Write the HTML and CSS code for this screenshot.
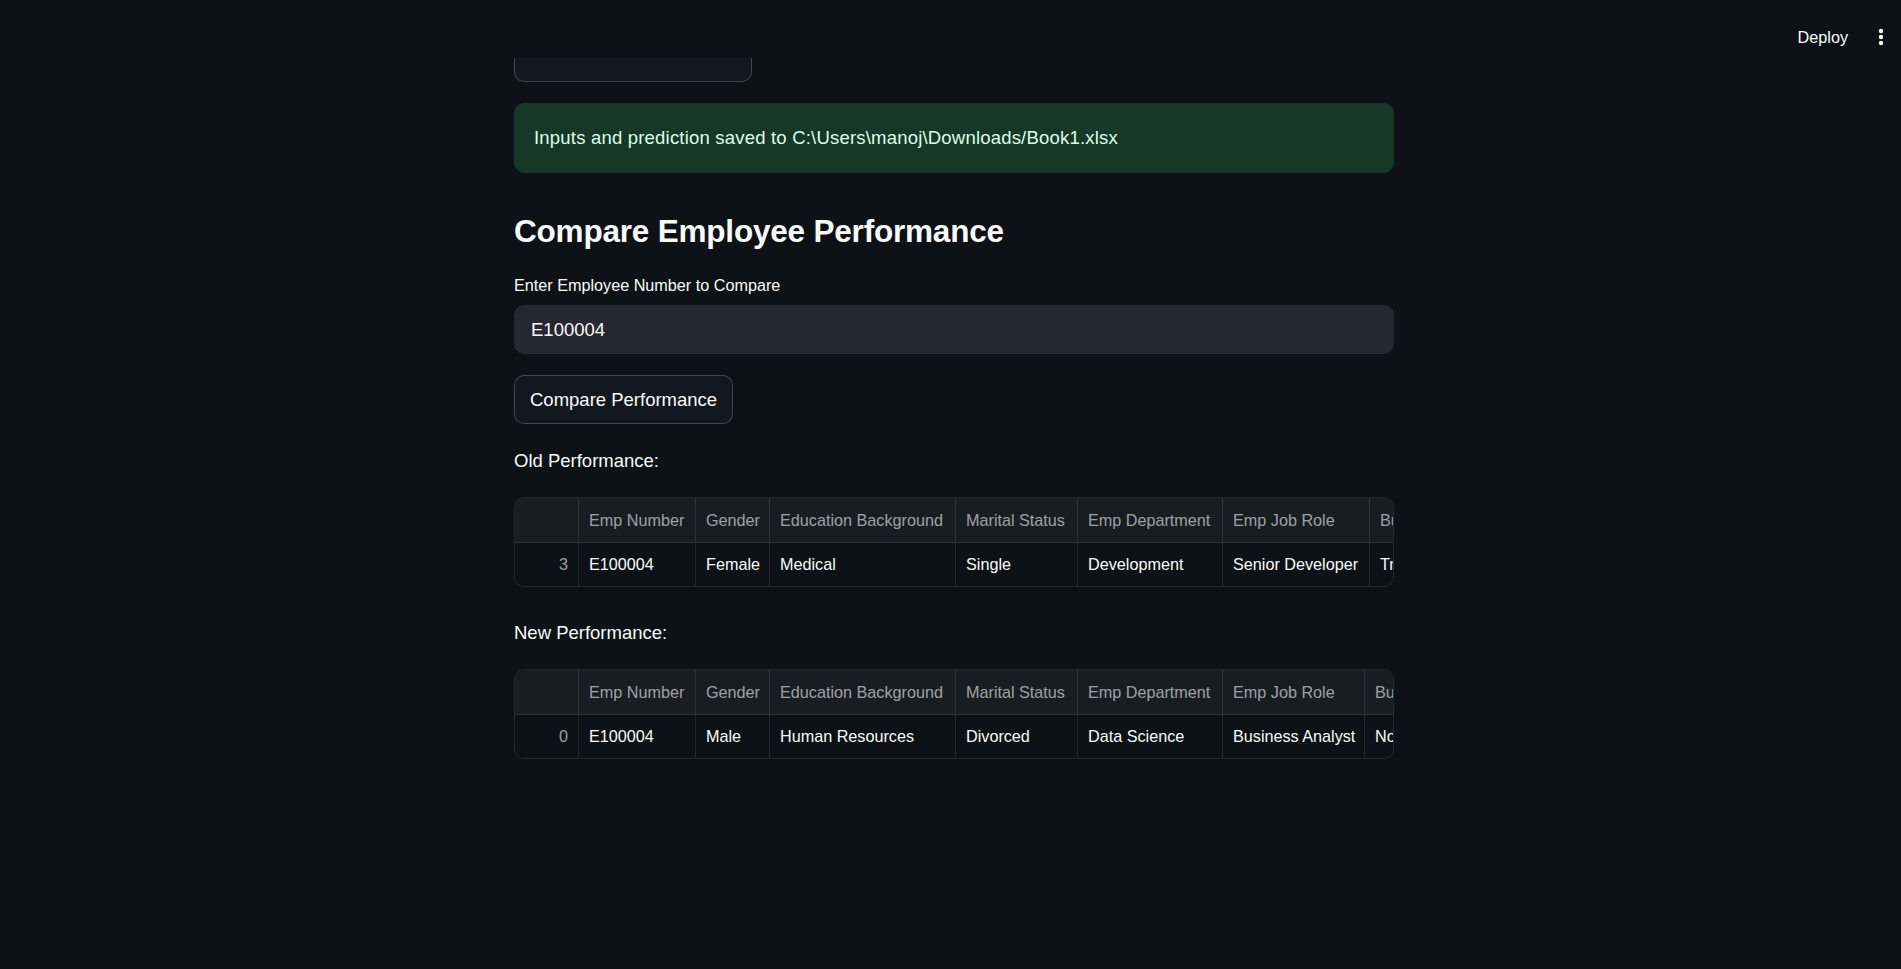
FILE: index.html
```html
<!DOCTYPE html>
<html lang="en">
<head>
<meta charset="utf-8">
<title>Employee Performance</title>
<link rel="stylesheet" href="styles.css">
</head>
<body>
<header class="topbar">
  <span class="deploy">Deploy</span>
  <span class="menu" aria-label="menu">
    <svg width="6" height="18" viewBox="0 0 6 18"><circle cx="3" cy="3" r="2.2" fill="#fafafa"/><circle cx="3" cy="9" r="2.2" fill="#fafafa"/><circle cx="3" cy="15" r="2.2" fill="#fafafa"/></svg>
  </span>
</header>
<main class="main">
  <div class="block">
    <button class="btn btn-prev" aria-label="Save"></button>
    <div class="alert">Inputs and prediction saved to C:\Users\manoj\Downloads/Book1.xlsx</div>
    <h3 class="heading">Compare Employee Performance</h3>
    <label class="label">Enter Employee Number to Compare</label>
    <div class="input">E100004</div>
    <button class="btn btn-compare">Compare Performance</button>
    <p class="text text-old">Old Performance:</p>
    <div class="frame">
      <div class="grid t1">
        <div class="c h idx"></div>
        <div class="c h">Emp Number</div>
        <div class="c h">Gender</div>
        <div class="c h">Education Background</div>
        <div class="c h">Marital Status</div>
        <div class="c h">Emp Department</div>
        <div class="c h">Emp Job Role</div>
        <div class="c h">Business Travel Frequency</div>
        <div class="c idx num">3</div>
        <div class="c">E100004</div>
        <div class="c">Female</div>
        <div class="c">Medical</div>
        <div class="c">Single</div>
        <div class="c">Development</div>
        <div class="c">Senior Developer</div>
        <div class="c">Travel_Rarely</div>
      </div>
    </div>
    <p class="text text-new">New Performance:</p>
    <div class="frame">
      <div class="grid t2">
        <div class="c h idx"></div>
        <div class="c h">Emp Number</div>
        <div class="c h">Gender</div>
        <div class="c h">Education Background</div>
        <div class="c h">Marital Status</div>
        <div class="c h">Emp Department</div>
        <div class="c h">Emp Job Role</div>
        <div class="c h">Business Travel Frequency</div>
        <div class="c idx num">0</div>
        <div class="c">E100004</div>
        <div class="c">Male</div>
        <div class="c">Human Resources</div>
        <div class="c">Divorced</div>
        <div class="c">Data Science</div>
        <div class="c">Business Analyst</div>
        <div class="c">Non-Travel</div>
      </div>
    </div>
  </div>
</main>
</body>
</html>
```

FILE: styles.css
```css
* { box-sizing: border-box; }
html, body { margin: 0; padding: 0; }
body {
  background: #0e1117;
  color: #fafafa;
  font-family: "Liberation Sans", Arial, sans-serif;
  height: 969px;
  overflow: hidden;
}
.topbar {
  position: fixed;
  top: 0; left: 0; right: 0;
  height: 58px;
  background: #0e1117;
  z-index: 10;
  display: flex;
  justify-content: flex-end;
  align-items: flex-start;
  padding: 25px 17px 0 0;
  gap: 30px;
}
.deploy {
  font-size: 16.2px;
  line-height: 24px;
  color: #fafafa;
}
.menu { display: flex; padding-top: 3px; }
.main {
  display: flex;
  justify-content: center;
  padding-left: 7px;
  padding-top: 33px;
}
.block {
  width: 880px;
  display: flex;
  flex-direction: column;
  align-items: flex-start;
}
.btn {
  font-family: inherit;
  font-size: 18.5px;
  color: #fafafa;
  background: rgb(19, 23, 32);
  border: 1px solid rgba(250, 250, 250, 0.2);
  border-radius: 10px;
  height: 49px;
  padding: 0 15px;
  line-height: 28px;
  white-space: nowrap;
}
.btn-prev { width: 238px; }
.btn-compare { width: 219px; margin-top: 21px; }
.alert {
  width: 100%;
  margin-top: 21px;
  background: rgba(61, 213, 109, 0.2);
  color: #dffde9;
  border-radius: 10px;
  padding: 20px;
  font-size: 18.5px;
  line-height: 30px;
  letter-spacing: 0.2px;
}
.heading {
  margin: 38px 0 0;
  font-size: 31.5px;
  font-weight: 700;
  line-height: 40px;
  letter-spacing: -0.2px;
}
.label {
  margin-top: 23px;
  font-size: 16.2px;
  line-height: 22px;
}
.input {
  margin-top: 9px;
  width: 100%;
  height: 49px;
  background: #262730;
  border-radius: 10px;
  padding: 0 17px;
  font-size: 18.5px;
  line-height: 49px;
}
.text {
  margin: 0;
  font-size: 18.5px;
  line-height: 28px;
}
.text-old { margin-top: 23px; }
.text-new { margin-top: 32px; }
.frame {
  margin-top: 22px;
  width: 880px;
  border: 1px solid rgba(250, 250, 250, 0.1);
  border-radius: 10px;
  overflow: hidden;
}
.grid {
  display: grid;
  grid-template-rows: 45px 43px;
  width: max-content;
}
.t1 { grid-template-columns: 64px 117px 74px 186px 122px 145px 147px 220px; }
.t2 { grid-template-columns: 64px 117px 74px 186px 122px 145px 142px 220px; }
.c {
  font-size: 16.2px;
  white-space: nowrap;
  overflow: hidden;
  padding: 0 10px;
  display: flex;
  align-items: center;
  background: #0e1117;
  color: #fafafa;
  border-right: 1px solid rgba(250, 250, 250, 0.1);
}
.c.h {
  background: #1a1c24;
  color: rgba(250, 250, 250, 0.6);
  border-bottom: 1px solid rgba(250, 250, 250, 0.1);
}
.c.num {
  justify-content: flex-end;
  color: rgba(250, 250, 250, 0.6);
}
```
